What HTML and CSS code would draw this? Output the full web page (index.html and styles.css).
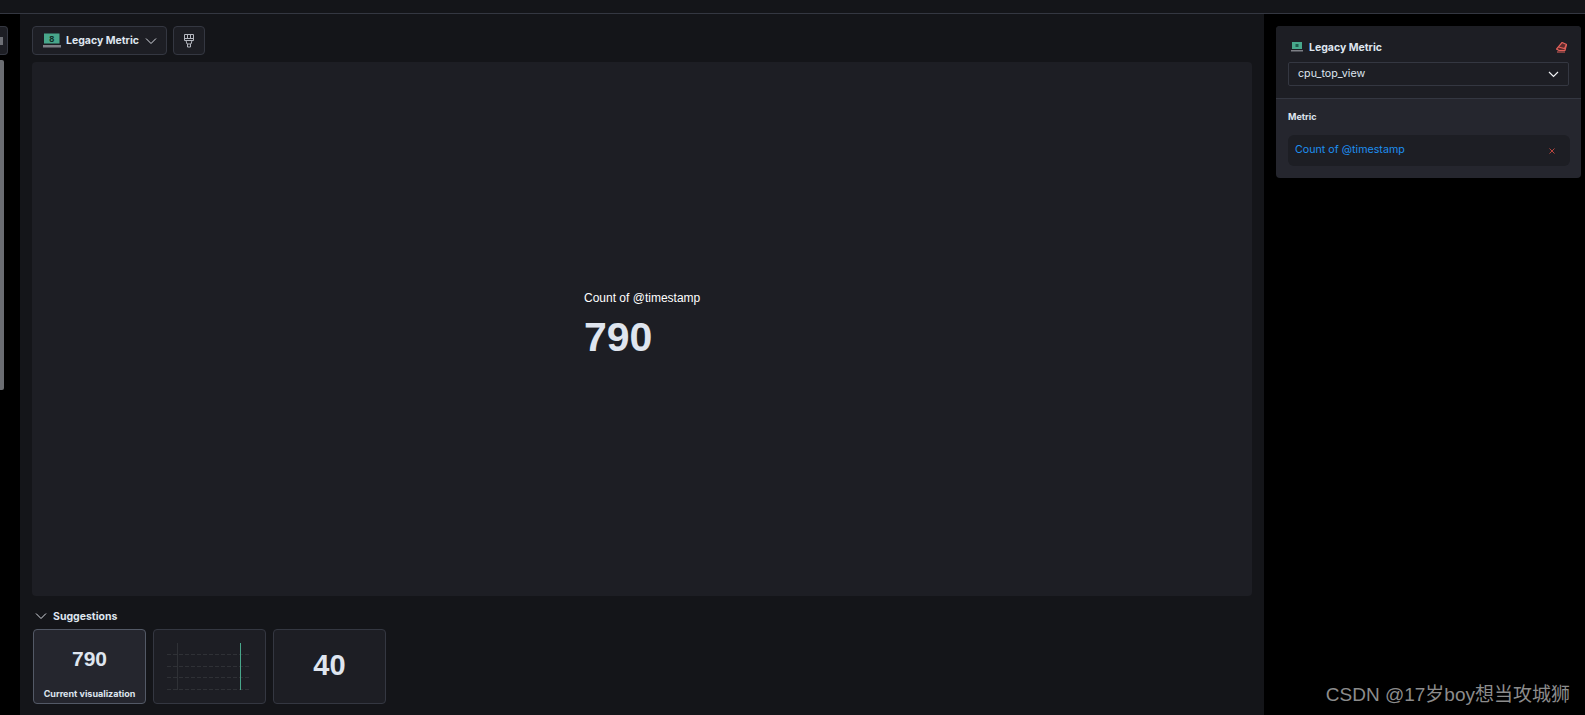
FILE: index.html
```html
<!DOCTYPE html>
<html lang="en">
<head>
    <meta charset="UTF-8">
    <meta name="viewport" content="width=device-width, initial-scale=1.0">
    <title>Legacy Metric</title>
    <link rel="stylesheet" href="styles.css">
</head>
<body>

    <div class="top-bar"></div>

    <div class="page">
        <div class="left-rail">
            <div class="rail-button"><span class="rail-mark"></span></div>
            <div class="rail-scroll"></div>
        </div>

        <div class="workspace">
            <div class="toolbar">
                <button class="chart-switch">
                    <svg class="metric-icon" width="18" height="15" viewBox="0 0 18 15">
                        <rect x="1" y="0.5" width="15.5" height="10" fill="#48a78b"/>
                        <rect x="0" y="12" width="18" height="2.5" fill="#7d7f85"/>
                        <text x="8.7" y="9" class="metric-digit">8</text>
                    </svg>
                    <span>Legacy Metric</span>
                    <svg class="switch-chevron" width="12" height="8" viewBox="0 0 12 8"><path d="M1 1.5 L6 6.5 L11 1.5" fill="none" stroke="#d8dbe2" stroke-width="1"/></svg>
                </button>
                <button class="brush-button">
                    <svg width="10" height="14" viewBox="0 0 10 14">
                        <path d="M0.5 0.5 H9.5 V6.5 H0.5 Z M0.5 4.5 H9.5 M3.5 0.5 V4.5 M6.5 0.5 V4.5 M2 6.5 L3 10 H7 L8 6.5 M3.5 10 V13 H6.5 V10" fill="none" stroke="#b4b7bf" stroke-width="1"/>
                    </svg>
                </button>
            </div>

            <div class="chart-panel">
                <div class="legacy-metric">
                    <div class="metric-title">Count of @timestamp</div>
                    <div class="metric-value">790</div>
                </div>
            </div>

            <div class="suggestions-title">
                <svg width="12" height="8" viewBox="0 0 12 8"><path d="M1 1.5 L6 6.5 L11 1.5" fill="none" stroke="#d8dbe2" stroke-width="1"/></svg>
                <span>Suggestions</span>
            </div>

            <div class="suggestions">
                <div class="suggestion current">
                    <div class="suggestion-value">790</div>
                    <div class="suggestion-label">Current visualization</div>
                </div>
                <div class="suggestion">
                    <svg class="mini-chart" width="111" height="73" viewBox="0 0 111 73">
                        <g stroke="#2f3136" stroke-width="1" stroke-dasharray="4 2">
                            <path d="M13 24.5 H97"/>
                            <path d="M13 36.5 H97"/>
                            <path d="M13 47.5 H97"/>
                            <path d="M13 59.5 H97"/>
                        </g>
                        <path d="M23.5 13 V60" stroke="#2f3136" stroke-width="1"/>
                        <path d="M86.5 13 V60" stroke="#48a78b" stroke-width="1"/>
                    </svg>
                </div>
                <div class="suggestion">
                    <div class="suggestion-big">40</div>
                </div>
            </div>
        </div>

        <div class="side">
            <div class="config-card">
                <div class="config-top">
                    <div class="config-head">
                        <svg width="12" height="10" viewBox="0 0 12 10">
                            <rect x="1" y="0" width="10" height="7" fill="#48a78b"/>
                            <rect x="4.5" y="2" width="3" height="3" fill="#1d5c4c"/>
                            <rect x="0" y="8" width="12" height="1.5" fill="#7d7f85"/>
                        </svg>
                        <span class="config-name">Legacy Metric</span>
                        <svg class="eraser" width="11" height="11" viewBox="0 0 11 11">
                            <path d="M6 0.5 L10.5 2.5 L9 8.5 H3 L0.5 7 Z" fill="#5c2b2c" stroke="#e0605a" stroke-width="1.2"/>
                            <path d="M2.5 5 L8.5 6.5 L10.5 2.5" fill="none" stroke="#e0605a" stroke-width="1.2"/>
                            <path d="M1 10 H9" stroke="#e0605a" stroke-width="1"/>
                        </svg>
                    </div>
                    <div class="config-select">
                        <span>cpu_top_view</span>
                        <svg width="11" height="7" viewBox="0 0 11 7"><path d="M1 1 L5.5 5.5 L10 1" fill="none" stroke="#f0f1f4" stroke-width="1.2"/></svg>
                    </div>
                </div>
                <div class="config-bottom">
                    <div class="config-label">Metric</div>
                    <div class="config-row">
                        <span class="row-link">Count of @timestamp</span>
                        <svg width="6" height="6" viewBox="0 0 6 6"><path d="M0.5 0.5 L5.5 5.5 M5.5 0.5 L0.5 5.5" stroke="#b8463f" stroke-width="1"/></svg>
                    </div>
                </div>
            </div>
        </div>
    </div>

    <div class="watermark">CSDN @17岁boy想当攻城狮</div>

</body>
</html>
```

FILE: styles.css
```css
* {
    margin: 0;
    padding: 0;
    box-sizing: border-box;
}

body {
    height: 715px;
    overflow: hidden;
    background-color: #000;
    font-family: Inter, "Liberation Sans", sans-serif;
    color: #dfe5ef;
}

.top-bar {
    height: 14px;
    background-color: #141519;
    border-bottom: 1px solid #343741;
}

.page {
    display: flex;
    height: 701px;
}

/* left strip */
.left-rail {
    width: 20px;
    padding-top: 12px;
}

.rail-button {
    width: 8px;
    height: 29px;
    background-color: #1d1e24;
    border: 1px solid #343741;
    border-left: none;
    border-radius: 0 4px 4px 0;
    display: flex;
    align-items: center;
}

.rail-mark {
    width: 3px;
    height: 8px;
    background-color: #6e7076;
}

.rail-scroll {
    width: 4px;
    height: 330px;
    margin-top: 5px;
    background-color: #6b6d72;
    border-radius: 0 2px 2px 0;
}

/* main area */
.workspace {
    width: 1244px;
    background-color: #141519;
    padding: 12px 12px 0 12px;
}

.toolbar {
    display: flex;
    gap: 6px;
    height: 29px;
}

.chart-switch,
.brush-button {
    background-color: #1d1e24;
    border: 1px solid #343741;
    border-radius: 4px;
    color: #dfe5ef;
    display: flex;
    align-items: center;
    justify-content: center;
    font-family: Inter, sans-serif;
}

.chart-switch {
    width: 135px;
    justify-content: flex-start;
    gap: 5px;
    padding-left: 10px;
    font-size: 10.5px;
    font-weight: 700;
}

.switch-chevron {
    margin-left: 1px;
}

.brush-button {
    width: 32px;
}

.metric-digit {
    font-family: "Liberation Sans", sans-serif;
    font-size: 9px;
    fill: #0f2e26;
    text-anchor: middle;
}

.chart-panel {
    height: 534px;
    margin-top: 7px;
    background-color: #1d1e24;
    border-radius: 4px;
    display: flex;
    align-items: center;
    justify-content: center;
}

.legacy-metric {
    width: 116px;
    margin-top: -7px;
    font-family: "Liberation Sans", sans-serif;
}

.metric-title {
    font-size: 12px;
    color: #fff;
    white-space: nowrap;
}

.metric-value {
    font-size: 41px;
    font-weight: 700;
    line-height: 48px;
    margin-top: 8px;
}

.suggestions-title {
    display: flex;
    align-items: center;
    gap: 6px;
    height: 14px;
    margin-top: 13px;
    padding-left: 3px;
    font-size: 10.5px;
    font-weight: 700;
}

.suggestions {
    display: flex;
    gap: 7px;
    margin-top: 6px;
    padding-left: 1px;
}

.suggestion {
    position: relative;
    width: 113px;
    height: 75px;
    background-color: #1d1e24;
    border: 1px solid #343741;
    border-radius: 4px;
    display: flex;
    flex-direction: column;
    align-items: center;
    justify-content: center;
}

.suggestion.current {
    background-color: #25262e;
    border-color: #535966;
    justify-content: flex-start;
}

.suggestion-value {
    margin-top: 17px;
    font-family: "Liberation Sans", sans-serif;
    font-size: 21px;
    font-weight: 700;
    line-height: 24px;
}

.suggestion-big {
    font-family: "Liberation Sans", sans-serif;
    font-size: 29px;
    font-weight: 700;
    margin-top: -2px;
}

.suggestion-label {
    margin-top: 17px;
    font-size: 9px;
    font-weight: 700;
    white-space: nowrap;
}

/* right config panel */
.side {
    flex: 1;
    padding: 12px 4px 0 12px;
}

.config-card {
    border-radius: 4px;
    overflow: hidden;
    background-color: #25262e;
}

.config-top {
    height: 73px;
    padding: 13px 12px 0 12px;
    background-color: #1d1e24;
    border-bottom: 1px solid #343741;
}

.config-head {
    display: flex;
    align-items: center;
    gap: 6px;
    height: 16px;
    padding: 0 2px 0 3px;
}

.config-name {
    flex: 1;
    font-size: 10.5px;
    font-weight: 700;
}

.config-select {
    display: flex;
    justify-content: space-between;
    align-items: center;
    height: 24px;
    margin-top: 7px;
    padding: 0 9px 0 9px;
    border: 1px solid #343741;
    border-radius: 2px;
    font-size: 10.7px;
    line-height: 20px;
}

.config-select span {
    margin-top: -1px;
}

.config-bottom {
    height: 79px;
    padding: 12px 11px 0 12px;
}

.config-label {
    font-size: 9px;
    font-weight: 700;
    line-height: 12px;
}

.config-row {
    display: flex;
    justify-content: space-between;
    align-items: center;
    height: 31px;
    margin-top: 12px;
    padding: 0 15px 0 7px;
    background-color: #1d1e24;
    border-radius: 6px;
}

.row-link {
    font-size: 10.7px;
    color: #1d8ff0;
    margin-top: -2px;
}

.watermark {
    position: absolute;
    right: 15px;
    top: 683px;
    font-family: "Liberation Sans", "Noto Sans CJK SC", sans-serif;
    font-size: 19px;
    line-height: 24px;
    color: #8c8c8c;
    white-space: nowrap;
}
```
